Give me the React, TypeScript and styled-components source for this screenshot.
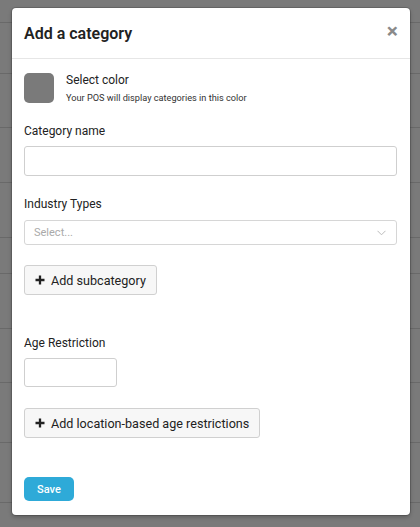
import styled, { createGlobalStyle } from "styled-components";

const GlobalStyle = createGlobalStyle`
  html, body {
    margin: 0;
    padding: 0;
  }
  body {
    font-family: Roboto, "Liberation Sans", Arial, sans-serif;
    color: #222;
    background: #fff;
  }
  * {
    box-sizing: border-box;
  }
`;

const rowHeights = [23, 51, 54, 55, 55, 36, 55, 54, 60, 60];

function PlusIcon() {
  return (
    <svg width="10" height="10" viewBox="0 0 10 10">
      <path d="M5 0.5v9M0.5 5h9" stroke="#222" strokeWidth="2.3" />
    </svg>
  );
}

function Chevron() {
  return (
    <svg width="9" height="6" viewBox="0 0 9 6">
      <path d="M0.5 0.8l4 4 4-4" fill="none" stroke="#bbb" strokeWidth="1" />
    </svg>
  );
}

function App() {
  return (
    <Page>
      <GlobalStyle />
      <Table>
        {rowHeights.map((h, i) => (
          <Row key={i} style={{ height: h }} />
        ))}
      </Table>

      <Overlay>
        <Modal>
          <Header>
            <Title>Add a category</Title>
            <Close>×</Close>
          </Header>

          <Body>
            <ColorRow>
              <Swatch />
              <ColorText>
                <ColorTitle>Select color</ColorTitle>
                <ColorHint>Your POS will display categories in this color</ColorHint>
              </ColorText>
            </ColorRow>

            <Label $top={19}>Category name</Label>
            <TextInput type="text" />

            <Label $top={20}>Industry Types</Label>
            <SelectBox>
              <Placeholder>Select...</Placeholder>
              <Chevron />
            </SelectBox>

            <AddButton $top={20}>
              <PlusIcon />
              Add subcategory
            </AddButton>

            <Label $top={40}>Age Restriction</Label>
            <AgeInput type="text" />

            <AddButton $top={21}>
              <PlusIcon />
              Add location-based age restrictions
            </AddButton>

            <Save>Save</Save>
          </Body>
        </Modal>
      </Overlay>
    </Page>
  );
}

export default App;

const Page = styled.div`
  position: relative;
  width: 420px;
  height: 527px;
  overflow: hidden;
  background: #fff;
`;

const Table = styled.div`
  display: flex;
  flex-direction: column;
`;

const Row = styled.div`
  border-bottom: 1px solid #dcdcdc;
`;

const Overlay = styled.div`
  position: absolute;
  inset: 0;
  background: rgba(0, 0, 0, 0.52);
  padding: 8px 10px 0 12px;
`;

const Modal = styled.div`
  width: 398px;
  background: #fff;
  border-radius: 4px;
  box-shadow: 0 0 0 1px rgba(0, 0, 0, 0.15), 0 2px 4px rgba(0, 0, 0, 0.25);
`;

const Header = styled.div`
  height: 51px;
  display: flex;
  align-items: center;
  justify-content: space-between;
  padding: 0 12px 0 12px;
  border-bottom: 1px solid #e6e6e6;
`;

const Title = styled.h2`
  margin: 0;
  font-size: 16px;
  font-weight: 600;
  color: #222;
  padding-top: 1px;
`;

const Close = styled.span`
  font-size: 21px;
  font-weight: 700;
  color: #8a8a8a;
  line-height: 1;
  margin-top: -3px;
`;

const Body = styled.div`
  padding: 14px 13px 14px 12px;
  display: flex;
  flex-direction: column;
  align-items: flex-start;
`;

const ColorRow = styled.div`
  display: flex;
  align-items: flex-start;
  gap: 12px;
`;

const Swatch = styled.div`
  width: 30px;
  height: 30px;
  border-radius: 5px;
  background: #7a7a7a;
`;

const ColorText = styled.div`
  display: flex;
  flex-direction: column;
`;

const ColorTitle = styled.span`
  font-size: 12px;
  line-height: 14px;
  color: #222;
`;

const ColorHint = styled.span`
  font-size: 9.2px;
  line-height: 12px;
  margin-top: 5px;
  color: #333;
`;

const Label = styled.label<{ $top: number }>`
  display: block;
  margin-top: ${(p) => p.$top}px;
  font-size: 12px;
  line-height: 16px;
  color: #222;
`;

const TextInput = styled.input`
  margin-top: 7px;
  width: 373px;
  height: 30px;
  border: 1px solid #cfcfcf;
  border-radius: 3px;
  outline: none;
`;

const SelectBox = styled.div`
  margin-top: 8px;
  width: 373px;
  height: 25px;
  border: 1px solid #d6d6d6;
  border-radius: 3px;
  display: flex;
  align-items: center;
  justify-content: space-between;
  padding: 0 10px 0 9px;
`;

const Placeholder = styled.span`
  font-size: 11px;
  color: #aaa;
`;

const AddButton = styled.button<{ $top: number }>`
  margin-top: ${(p) => p.$top}px;
  height: 30px;
  display: flex;
  align-items: center;
  gap: 6px;
  padding: 0 10px 0 10px;
  font-family: inherit;
  font-size: 12.6px;
  color: #222;
  background: #f7f7f7;
  border: 1px solid #d0d0d0;
  border-radius: 3px;
`;

const AgeInput = styled.input`
  margin-top: 7px;
  width: 93px;
  height: 29px;
  border: 1px solid #cfcfcf;
  border-radius: 3px;
  outline: none;
`;

const Save = styled.button`
  margin-top: 39px;
  width: 50px;
  height: 24px;
  border: none;
  border-radius: 5px;
  background: #2eaad8;
  color: #fff;
  font-family: inherit;
  font-size: 11px;
  font-weight: 500;
`;
